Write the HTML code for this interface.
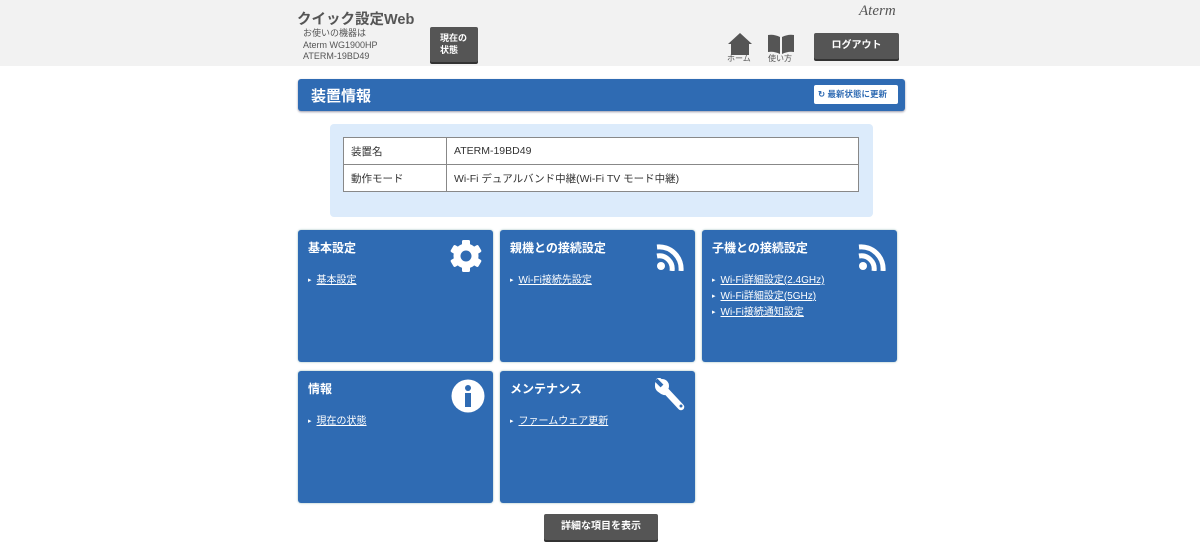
<!DOCTYPE html>
<html><head><meta charset="utf-8"><style>
*{margin:0;padding:0;box-sizing:border-box}
body{width:1200px;height:550px;background:#fff;font-family:"Liberation Sans","Noto Sans CJK JP",sans-serif;position:relative;overflow:hidden;color:#333}
.a{position:absolute}
.hdr{left:0;top:0;width:1200px;height:66px;background:#f2f2f2}
.btn{background:#555;color:#fff;font-weight:bold;border-radius:2px;box-shadow:0 2px 0 #333;font-size:10px}
.card{background:#2f6bb3;border-radius:3px;box-shadow:0 0 2px #9bb;width:195px;height:132px;color:#fff}
.card h3{position:absolute;left:10px;top:9px;font-size:12px;font-weight:bold}
.card ul{position:absolute;left:10px;top:43px;list-style:none;font-size:10px;line-height:15px}
.card li:before{content:"▸";font-size:7px;margin-right:5px;position:relative;top:-1px}
.card li span{text-decoration:underline}
.card svg{position:absolute}
td{border:1px solid #888;font-size:10.5px;height:27px;padding-left:7px;background:#fff}
</style></head><body>
<div class="a hdr"></div>
<div class="a" style="left:297px;top:8px;font-size:14.5px;font-weight:bold;color:#555">クイック設定Web</div>
<div class="a" style="left:303px;top:28px;font-size:9px;line-height:11.5px;color:#555">お使いの機器は<br>Aterm WG1900HP<br>ATERM-19BD49</div>
<div class="a btn" style="left:430px;top:27px;width:48px;height:35px;padding:5px 0 0 10px;line-height:12px;font-size:9px">現在の<br>状態</div>
<div class="a" style="left:859px;top:3px;font-size:15px;font-style:italic;color:#555;font-family:'Liberation Serif',serif">Aterm</div>
<svg class="a" style="left:728px;top:33px" width="24" height="22"><path d="M12 0L24 11H21V22H3V11H0Z" fill="#555"/></svg>
<div class="a" style="left:727px;top:53px;font-size:8px;color:#555">ホーム</div>
<svg class="a" style="left:767px;top:34px" width="28" height="20"><path d="M1 1Q7 0 13 3V20Q7 17 1 18Z M15 3Q21 0 27 1V18Q21 17 15 20Z" fill="#555"/></svg>
<div class="a" style="left:768px;top:53px;font-size:8px;color:#555">使い方</div>
<div class="a btn" style="left:814px;top:33px;width:85px;height:26px;text-align:center;line-height:25px">ログアウト</div>
<div class="a" style="left:298px;top:79px;width:607px;height:32px;background:#2f6bb3;border-radius:3px;box-shadow:0 1px 2px #99a"></div>
<div class="a" style="left:311px;top:85px;font-size:15px;font-weight:bold;color:#fff">装置情報</div>
<div class="a" style="left:814px;top:85px;width:84px;height:19px;background:#fff;border-radius:2px;font-size:8.5px;color:#2f6bb3;line-height:19px;padding-left:4px;font-weight:bold">↻ 最新状態に更新</div>
<div class="a" style="left:330px;top:124px;width:543px;height:93px;background:#dcebfb;border-radius:4px"></div>
<table class="a" style="left:343px;top:137px;width:516px;border-collapse:collapse">
<tr><td style="width:103px">装置名</td><td>ATERM-19BD49</td></tr>
<tr><td>動作モード</td><td>Wi-Fi デュアルバンド中継(Wi-Fi TV モード中継)</td></tr></table>
<div class="a card" style="left:298px;top:230px"><h3>基本設定</h3>
<svg style="left:151px;top:9px" width="34" height="34" viewBox="-17 -17 34 34"><g fill="#fff"><circle r="12.5"/><g id="t"><rect x="-4" y="-16" width="8" height="8" rx="1.5"/><rect x="-4" y="8" width="8" height="8" rx="1.5"/></g><use href="#t" transform="rotate(60)"/><use href="#t" transform="rotate(120)"/></g><circle r="5.5" fill="#2f6bb3"/></svg>
<ul><li><span>基本設定</span></li></ul></div>
<div class="a card" style="left:500px;top:230px"><h3>親機との接続設定</h3>
<svg style="left:155px;top:11px" width="30" height="30"><g fill="none" stroke="#fff" stroke-width="5"><path d="M2 6A22 22 0 0 1 26 30"/><path d="M2 15A13 13 0 0 1 17 30"/></g><circle cx="6" cy="25" r="4" fill="#fff"/></svg>
<ul><li><span>Wi-Fi接続先設定</span></li></ul></div>
<div class="a card" style="left:702px;top:230px"><h3>子機との接続設定</h3>
<svg style="left:155px;top:11px" width="30" height="30"><g fill="none" stroke="#fff" stroke-width="5"><path d="M2 6A22 22 0 0 1 26 30"/><path d="M2 15A13 13 0 0 1 17 30"/></g><circle cx="6" cy="25" r="4" fill="#fff"/></svg>
<ul><li><span>Wi-Fi詳細設定(2.4GHz)</span></li><li><span>Wi-Fi詳細設定(5GHz)</span></li><li><span>Wi-Fi接続通知設定</span></li></ul></div>
<div class="a card" style="left:298px;top:371px"><h3>情報</h3>
<svg style="left:153px;top:8px" width="34" height="34"><circle cx="17" cy="17" r="16.5" fill="#fff"/><circle cx="17" cy="9" r="3" fill="#2f6bb3"/><rect x="14" y="14" width="6" height="14" fill="#2f6bb3"/></svg>
<ul><li><span>現在の状態</span></li></ul></div>
<div class="a card" style="left:500px;top:371px"><h3>メンテナンス</h3>
<svg style="left:153px;top:7px" width="34" height="34"><path d="M6 3A8 8 0 0 0 14 14L28 29" stroke="#fff" stroke-width="6.5" fill="none" stroke-linecap="round"/><circle cx="9" cy="8" r="7" fill="#fff"/><path d="M3 2L9 8" stroke="#2f6bb3" stroke-width="4"/><circle cx="28" cy="28" r="1.5" fill="#2f6bb3"/></svg>
<ul><li><span>ファームウェア更新</span></li></ul></div>
<div class="a btn" style="left:544px;top:514px;width:114px;height:26px;text-align:center;line-height:25px">詳細な項目を表示</div>
</body></html>
